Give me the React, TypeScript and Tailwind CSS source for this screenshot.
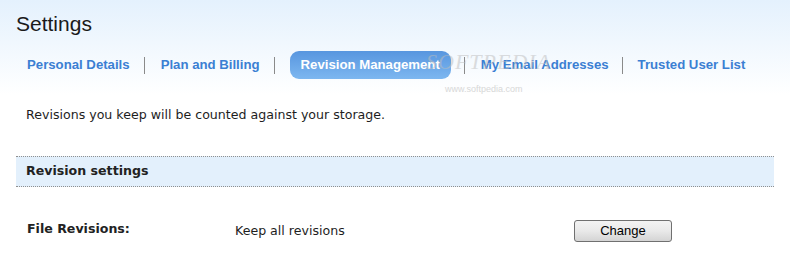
import React from "react";

function Sep({ cls }: { cls: string }) {
  return <div className={`w-px h-[17px] bg-[#8a8a8a] ${cls}`} />;
}

export default function App() {
  return (
    <div className="relative w-[790px] h-[280px] overflow-hidden bg-white text-[#1e1e1e] font-['DejaVu_Sans',Verdana,sans-serif]">
      <div className="bg-gradient-to-b from-[#e4f1fd] to-white pb-[16px]">
        <div className="pl-[16px] pt-[12px] text-[21px] leading-[24px] text-[#1a1a1a] font-['Liberation_Sans',Arial,sans-serif]">
          Settings
        </div>
        <div className="mt-[15px] flex items-center h-[28px] pl-[27px] text-[13.2px] font-bold text-[#3b7fd3] font-['Liberation_Sans',Arial,sans-serif]">
          <span>Personal Details</span>
          <Sep cls="ml-[14px] mr-[16px]" />
          <span>Plan and Billing</span>
          <Sep cls="ml-[14px] mr-[15px]" />
          <span className="h-[28px] px-[11px] flex items-center rounded-[9px] bg-gradient-to-b from-[#5896df] to-[#7db7f0] text-white">
            Revision Management
          </span>
          <Sep cls="ml-[13px] mr-[16px]" />
          <span>My Email Addresses</span>
          <Sep cls="ml-[13px] mr-[15px]" />
          <span>Trusted User List</span>
        </div>
      </div>

      <div className="-mt-[16px] pt-[28px] pl-[26px] text-[12.6px] leading-[16px]">
        Revisions you keep will be counted against your storage.
      </div>

      <div className="mt-[33px] ml-[16px] w-[758px] border-y border-dotted border-[#8f8f8f] bg-[#e3f0fc] pl-[10px] pt-[6px] pb-[7px] text-[12.6px] leading-[16px] font-bold text-[#222]">
        Revision settings
      </div>

      <div className="mt-[33px] flex items-start">
        <div className="ml-[27px] mt-[1px] w-[208px] text-[12.6px] leading-[16px] font-bold text-[#222]">
          File Revisions:
        </div>
        <div className="mt-[3px] w-[339px] text-[12.6px] leading-[16px]">
          Keep all revisions
        </div>
        <button className="w-[98px] h-[22px] rounded-[3px] border border-[#707070] bg-gradient-to-b from-[#f3f3f3] via-[#e9e9e9] to-[#d4d4d4] text-[13px] leading-[20px] text-black font-['Liberation_Sans',Arial,sans-serif]">
          Change
        </button>
      </div>

      <div className="pointer-events-none absolute left-[426px] top-[50px] text-[22px] leading-[24px] tracking-[1px] text-[#bdbdbd] opacity-50 italic font-['Liberation_Serif',serif]">
        SOFTPEDIA
      </div>
      <div className="pointer-events-none absolute left-[445px] top-[84px] text-[9px] leading-[10px] text-[#c8c8c8] opacity-70 font-['Liberation_Sans',Arial,sans-serif]">
        www.softpedia.com
      </div>
    </div>
  );
}
